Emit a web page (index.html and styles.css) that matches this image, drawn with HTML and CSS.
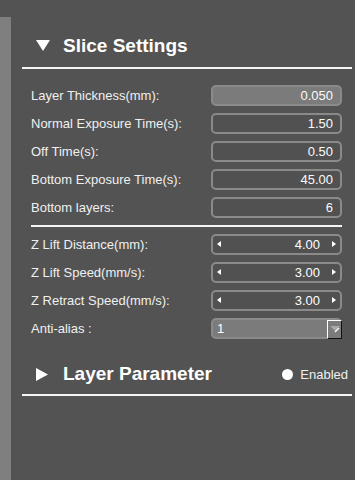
FILE: index.html
```html
<!DOCTYPE html>
<html lang="en">
<head>
    <meta charset="UTF-8">
    <meta name="viewport" content="width=device-width, initial-scale=1.0">
    <title>Slice Settings</title>
    <link rel="stylesheet" href="styles.css">
</head>
<body>

    <div class="strip"></div>

    <div class="panel">

        <!-- Slice Settings -->
        <div class="section-head">
            <svg class="arrow" width="14" height="12" viewBox="0 0 14 12"><polygon points="0,0 14,0 7,11" fill="#fff"/></svg>
            <span class="section-title">Slice Settings</span>
        </div>

        <div class="fields">
            <div class="row">
                <label>Layer Thickness(mm):</label>
                <input class="field filled" type="text" value="0.050" readonly>
            </div>
            <div class="row">
                <label>Normal Exposure Time(s):</label>
                <input class="field" type="text" value="1.50">
            </div>
            <div class="row">
                <label>Off Time(s):</label>
                <input class="field" type="text" value="0.50">
            </div>
            <div class="row">
                <label>Bottom Exposure Time(s):</label>
                <input class="field" type="text" value="45.00">
            </div>
            <div class="row">
                <label>Bottom layers:</label>
                <input class="field" type="text" value="6">
            </div>
        </div>

        <div class="divider"></div>

        <div class="fields second">
            <div class="row">
                <label>Z Lift Distance(mm):</label>
                <div class="spin">
                    <span class="spin-btn left"></span>
                    <span class="spin-value">4.00</span>
                    <span class="spin-btn right"></span>
                </div>
            </div>
            <div class="row">
                <label>Z Lift Speed(mm/s):</label>
                <div class="spin">
                    <span class="spin-btn left"></span>
                    <span class="spin-value">3.00</span>
                    <span class="spin-btn right"></span>
                </div>
            </div>
            <div class="row">
                <label>Z Retract Speed(mm/s):</label>
                <div class="spin">
                    <span class="spin-btn left"></span>
                    <span class="spin-value">3.00</span>
                    <span class="spin-btn right"></span>
                </div>
            </div>
            <div class="row">
                <label>Anti-alias :</label>
                <div class="select">
                    <span class="select-value">1</span>
                    <span class="drop-btn">
                        <svg width="12" height="10" viewBox="0 0 12 10">
                            <polygon points="1,2 11,2 6,7" fill="#a8a8a8"/>
                            <line x1="6" y1="8" x2="10" y2="4" stroke="#fff" stroke-width="1.3"/>
                        </svg>
                    </span>
                </div>
            </div>
        </div>

        <!-- Layer Parameter -->
        <div class="section-head layer-head">
            <svg class="arrow" width="12" height="13" viewBox="0 0 12 13"><polygon points="0,0 12,6.5 0,13" fill="#fff"/></svg>
            <span class="section-title">Layer Parameter</span>
            <span class="enabled"><span class="dot"></span>Enabled</span>
        </div>

    </div>

</body>
</html>
```

FILE: styles.css
```css
html, body {
    height: 100%;
}
body {
    margin: 0;
    display: flex;
    background-color: #535353;
    font-family: "Liberation Sans", Arial, sans-serif;
    color: #f0f0f0;
}
.strip {
    width: 11px;
    margin-top: 17px;
    background-color: #7f7f7f;
    flex-shrink: 0;
}
.panel {
    flex: 1;
    padding: 0 3px 0 11px;
}
.section-head {
    display: flex;
    align-items: center;
    height: 42px;
    margin-top: 25px;
    padding-left: 14px;
    border-bottom: 2px solid #f4f4f4;
}
.arrow {
    margin-right: 13px;
    flex-shrink: 0;
}
.section-title {
    font-size: 19px;
    font-weight: bold;
    color: #fff;
}
.layer-head {
    height: 40px;
    margin-top: 12px;
    padding-right: 4px;
}
.layer-head .arrow {
    margin-right: 15px;
}
.enabled {
    margin-left: auto;
    display: flex;
    align-items: center;
    font-size: 13px;
}
.dot {
    width: 11px;
    height: 11px;
    border-radius: 50%;
    background-color: #fff;
    margin-right: 7px;
}
.fields {
    margin-top: 12px;
    padding: 0 10px 0 9px;
}
.fields.second {
    margin-top: 3px;
}
.row {
    display: flex;
    align-items: center;
    justify-content: space-between;
    height: 28px;
}
.row label {
    font-size: 13px;
}
.field, .spin, .select {
    box-sizing: border-box;
    width: 131px;
    height: 21px;
    border: 2px solid #8a8a8a;
    border-radius: 5px;
    background-color: #515151;
}
.field {
    padding: 0 7px 0 4px;
    font-family: "Liberation Sans", Arial, sans-serif;
    font-size: 13px;
    color: #fafafa;
    text-align: right;
    outline: none;
}
.field.filled {
    background-color: #7b7b7b;
}
.divider {
    height: 2px;
    margin: 4px 10px 0 9px;
    background-color: #f4f4f4;
}
.spin {
    display: flex;
    align-items: center;
    padding: 0 3px;
}
.spin-btn {
    width: 0;
    height: 0;
    border-top: 3.5px solid transparent;
    border-bottom: 3.5px solid transparent;
}
.spin-btn.left {
    border-right: 4px solid #fff;
    margin-left: 1px;
}
.spin-btn.right {
    border-left: 4px solid #fff;
    margin-right: 1px;
}
.spin-value {
    flex: 1;
    text-align: right;
    padding-right: 12px;
    font-size: 13px;
    color: #fff;
}
.select {
    display: flex;
    align-items: center;
    background-color: #7b7b7b;
    padding-left: 4px;
}
.select-value {
    flex: 1;
    font-size: 13px;
    color: #fff;
}
.drop-btn {
    box-sizing: border-box;
    width: 15px;
    height: 19px;
    margin-top: 2px;
    margin-right: -2px;
    display: flex;
    align-items: center;
    justify-content: center;
    background-color: #7b7b7b;
    border-top: 1px solid #fff;
    border-left: 1px solid #fff;
    border-right: 1px solid #111;
    border-bottom: 1px solid #111;
}
```
